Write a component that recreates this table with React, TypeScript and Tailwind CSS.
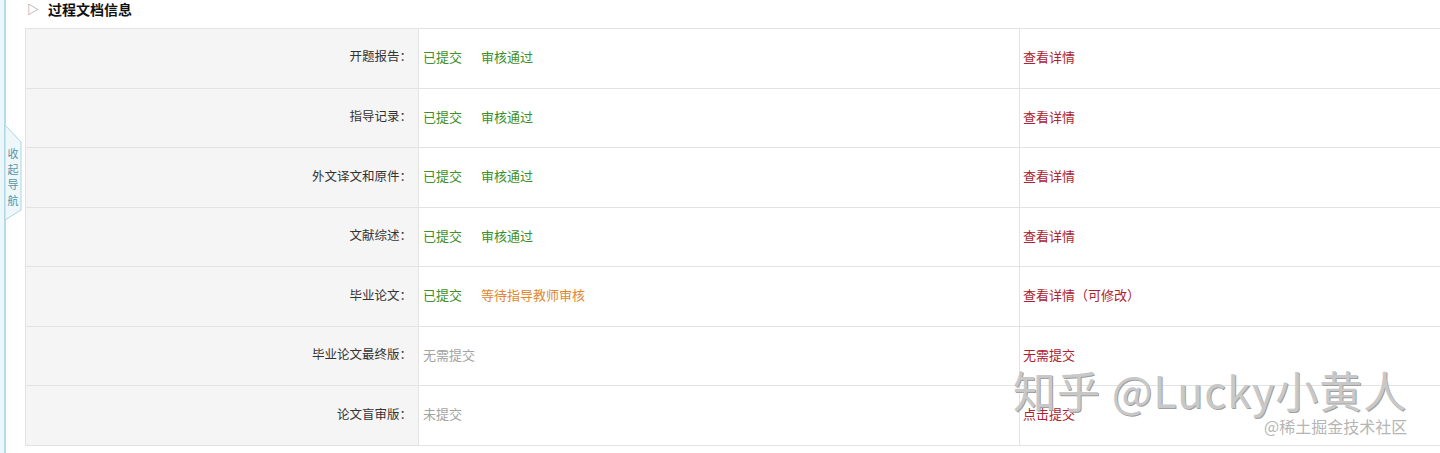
const rows = [
  { label: '开题报告：', status: '已提交', review: '审核通过', reviewTone: 'ok', action: '查看详情' },
  { label: '指导记录：', status: '已提交', review: '审核通过', reviewTone: 'ok', action: '查看详情' },
  { label: '外文译文和原件：', status: '已提交', review: '审核通过', reviewTone: 'ok', action: '查看详情' },
  { label: '文献综述：', status: '已提交', review: '审核通过', reviewTone: 'ok', action: '查看详情' },
  { label: '毕业论文：', status: '已提交', review: '等待指导教师审核', reviewTone: 'wait', action: '查看详情（可修改）' },
  { label: '毕业论文最终版：', status: '无需提交', review: '', reviewTone: 'none', action: '无需提交' },
  { label: '论文盲审版：', status: '未提交', review: '', reviewTone: 'none', action: '点击提交' },
];

function NavTab() {
  return (
    <div className="absolute left-0 top-[124px] h-[98px] w-[24px]">
      <svg width="24" height="98" viewBox="0 0 24 98" className="absolute left-0 top-0">
        <polygon points="5,1 21,18 21,86 5,96" fill="#eef8fb" stroke="#a9d5e3" strokeWidth="1" />
      </svg>
      <div className="absolute left-[7px] top-[22px] flex w-[12px] flex-col items-center text-[11px] leading-[15.5px] text-[#5a93a3]">
        <span>收</span>
        <span>起</span>
        <span>导</span>
        <span>航</span>
      </div>
    </div>
  );
}

export default function App() {
  return (
    <div className="relative flex h-[453px] w-[1440px] overflow-hidden bg-white font-['Noto_Sans_CJK_SC','Noto_Sans',sans-serif] text-[13px] text-[#333]">
      {/* left collapse strip */}
      <aside className="relative w-[25px] shrink-0">
        <div className="h-full w-[6px] border-r-2 border-[#b5dcea] bg-[#ecf7fb]" />
        <NavTab />
      </aside>

      <main className="flex-1">
        <div className="flex h-[28px] items-start pt-[1px]">
          <span className="mt-[1px] ml-[2px] text-[12px] leading-[14px] text-[#888]">▷</span>
          <h3 className="ml-[9px] text-[14px] font-bold leading-[16px] text-[#111]">过程文档信息</h3>
        </div>

        <div className="border-t border-l border-[#e3e3e3]">
          {rows.map((r) => (
            <div key={r.label} className="grid h-[59.57px] grid-cols-[392px_601px_1fr] border-b border-[#e3e3e3]">
              <div className="flex items-center justify-end bg-[#f5f5f5] pr-[6px] pb-[3px] text-[12.5px] text-[#333]">{r.label}</div>
              <div className="flex items-center border-l border-[#e3e3e3] pl-[4px] pb-[3px]">
                <span className={r.reviewTone === 'none' ? 'text-[#a3a3a3]' : 'text-[#3c8f2a]'}>{r.status}</span>
                {r.review && (
                  <span className={`ml-[19px] ${r.reviewTone === 'wait' ? 'text-[#e2872f]' : 'text-[#3c8f2a]'}`}>{r.review}</span>
                )}
              </div>
              <div className="flex items-center border-l border-[#e3e3e3] pl-[3px] pb-[3px] text-[#ad2230]">{r.action}</div>
            </div>
          ))}
        </div>
      </main>

      {/* watermark */}
      <div className="pointer-events-none absolute left-[1013px] top-[361px] text-[43px] leading-[56px] tracking-[1px] text-[#c8c8c8] [text-shadow:1px_1px_0_#a0a0a0]">
        知乎 @Lucky小黄人
      </div>
      <div className="pointer-events-none absolute left-[1264px] top-[415px] text-[16px] leading-[22px] text-[#b5b5b5]">
        @稀土掘金技术社区
      </div>
    </div>
  );
}
